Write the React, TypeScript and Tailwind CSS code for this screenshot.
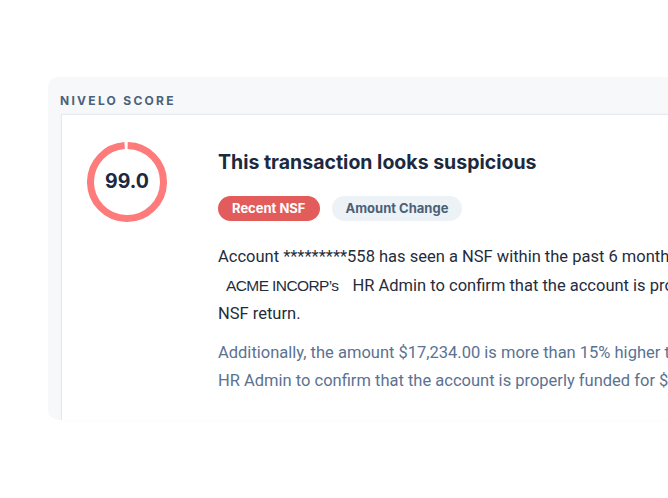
import React from "react";

function ScoreRing() {
  const r = 36.5;
  const c = 2 * Math.PI * r;
  return (
    <div className="relative w-[80px] h-[80px] shrink-0">
      <svg width="80" height="80" viewBox="0 0 80 80" className="absolute inset-0">
        <circle
          cx="40"
          cy="40"
          r={r}
          fill="none"
          stroke="#fd7b7b"
          strokeWidth="7"
          strokeDasharray={`${c * 0.985} ${c}`}
          transform="rotate(-89 40 40)"
        />
      </svg>
      <div className="absolute inset-0 flex items-center justify-center text-[19.5px] font-bold text-[#1b2a3f] font-['Inter',sans-serif]">
        99.0
      </div>
    </div>
  );
}

export default function App() {
  return (
    <div className="w-[668px] h-[498px] bg-white overflow-hidden font-['Roboto',sans-serif]">
      <div className="ml-[48px] mt-[77px] w-[720px] h-[343px] rounded-l-[10px] bg-[#f6f8fa] flex flex-col">
        <div className="pl-[12px] pt-[16px] h-[37px] text-[12px] leading-[16px] font-bold tracking-[0.19em] text-[#4b617a] font-['Inter',sans-serif]">
          NIVELO SCORE
        </div>
        <div className="ml-[13px] flex-1 bg-white border-l border-t border-[#e5e9ee] shadow-[0_0_3px_rgba(0,0,0,0.04)] flex pl-[25px] pt-[27px]">
          <ScoreRing />
          <div className="ml-[51px] pt-[8px] flex flex-col">
            <div className="text-[19.5px] leading-[24px] font-bold text-[#1b2a3f] font-['Inter',sans-serif] whitespace-nowrap">
              This transaction looks suspicious
            </div>
            <div className="mt-[22px] flex gap-[12px]">
              <span className="h-[25px] px-[14px] rounded-full bg-[#e35c5c] text-white text-[13px] font-bold flex items-center font-['Inter',sans-serif]">
                Recent NSF
              </span>
              <span className="h-[25px] px-[14px] rounded-full bg-[#edf2f6] text-[#4b5f78] text-[13px] font-bold flex items-center font-['Inter',sans-serif]">
                Amount Change
              </span>
            </div>
            <div className="mt-[22px] text-[16.5px] leading-[28.5px] text-[#1f2d3d] whitespace-nowrap">
              <div>Account *********558 has seen a NSF within the past 6 months. Contact</div>
              <div>
                <span className="pl-[8px] pr-[14px] text-[15.5px] tracking-[-0.6px] font-['Liberation_Sans',sans-serif]">ACME INCORP’s</span>
                HR Admin to confirm that the account is properly funded to avoid another
              </div>
              <div>NSF return.</div>
            </div>
            <div className="mt-[10px] text-[16.5px] leading-[28.5px] text-[#5b7291] whitespace-nowrap">
              <div>Additionally, the amount $17,234.00 is more than 15% higher than the average amount.</div>
              <div>HR Admin to confirm that the account is properly funded for $17,234.00.</div>
            </div>
          </div>
        </div>
      </div>
    </div>
  );
}
